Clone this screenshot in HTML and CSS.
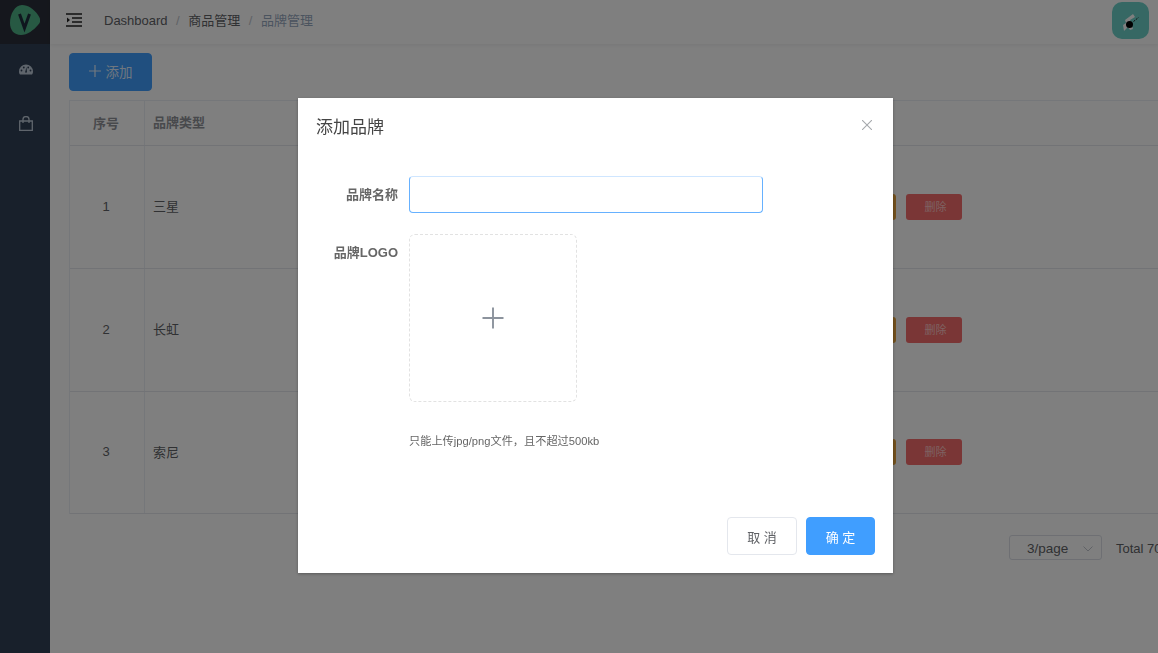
FILE: index.html
```html
<!DOCTYPE html>
<html lang="en">
<head>
    <meta charset="UTF-8">
    <meta name="viewport" content="width=device-width, initial-scale=1.0">
    <title>品牌管理</title>
    <link rel="stylesheet" href="styles.css">
</head>
<body>
    <div class="app">
        <aside class="sidebar">
            <div class="logo">
                <svg width="30" height="30" viewBox="0 0 30 30">
                    <path d="M12 0C18 0 24 4 28 10C31 14 31 17 28 20C24 25 17 30 11 30C4 30 0 25 0 18C0 9 5 0 12 0Z" fill="#4fb286"/>
                    <path d="M9.500 9L14.500 23L19.500 9" fill="none" stroke="#1f2d3d" stroke-width="3"/>
                </svg>
            </div>
            <div class="menu-item">
                <svg width="14" height="11" viewBox="0 0 14 11">
                    <path d="M7 0.500A7 7 0 0 0 0 7.500C0 8.800 0.400 10 1 10.500H13C13.600 10 14 8.800 14 7.500A7 7 0 0 0 7 0.500Z" fill="#bfcbd9"/>
                    <circle cx="2.500" cy="6.500" r="0.900" fill="#304156"/>
                    <circle cx="4.800" cy="3.500" r="0.900" fill="#304156"/>
                    <circle cx="11.500" cy="6.500" r="0.900" fill="#304156"/>
                    <circle cx="9.200" cy="3.500" r="0.900" fill="#304156"/>
                    <path d="M6 8.500L7.500 3L8 8.500Z" fill="#304156"/>
                </svg>
            </div>
            <div class="menu-item">
                <svg width="14" height="15" viewBox="0 0 14 15">
                    <path d="M0.700 5H13.300V14.300H0.700ZM4 7V3.300A3 2.700 0 0 1 10 3.300V7" fill="none" stroke="#bfcbd9" stroke-width="1.300"/>
                </svg>
            </div>
        </aside>

        <div class="main">
            <header class="navbar">
                <svg class="fold-icon" width="16" height="14" viewBox="0 0 16 14">
                    <path d="M0 1H16M6 5H16M6 9H16M0 13H16" stroke="#222" stroke-width="1.400"/>
                    <path d="M1 4.500L4 7L1 9.500Z" fill="#222"/>
                </svg>
                <nav class="breadcrumb">
                    <span>Dashboard</span><i>/</i><span>商品管理</span><i>/</i><span class="current">品牌管理</span>
                </nav>
                <div class="avatar">
                    <svg width="24" height="24" viewBox="0 0 24 24">
                        <path d="M6 11L14 5L16 8L11 11L14 20L11 21L9 18L5 22L4 16L7 14Z" fill="#fff"/>
                        <circle cx="10.500" cy="15.500" r="3.500" fill="#000"/>
                        <path d="M14.500 12.500L19.500 8.500" stroke="#222" stroke-width="1" stroke-dasharray="2 1"/>
                    </svg>
                </div>
            </header>

            <section class="content">
                <button class="btn-add">
                    <svg width="12" height="12" viewBox="0 0 12 12"><path d="M6 0V12M0 6H12" stroke="#fff" stroke-opacity="0.850" stroke-width="1.200"/></svg>
                    添加
                </button>

                <div class="table">
                    <div class="row head">
                        <div class="cell col-no">序号</div>
                        <div class="cell col-name">品牌类型</div>
                        <div class="cell col-logo"></div>
                        <div class="cell col-ops"></div>
                    </div>
                    <div class="row">
                        <div class="cell col-no">1</div>
                        <div class="cell col-name">三星</div>
                        <div class="cell col-logo"></div>
                        <div class="cell col-ops"><button class="op op-edit">修改</button><button class="op op-del">删除</button></div>
                    </div>
                    <div class="row">
                        <div class="cell col-no">2</div>
                        <div class="cell col-name">长虹</div>
                        <div class="cell col-logo"></div>
                        <div class="cell col-ops"><button class="op op-edit">修改</button><button class="op op-del">删除</button></div>
                    </div>
                    <div class="row last">
                        <div class="cell col-no">3</div>
                        <div class="cell col-name">索尼</div>
                        <div class="cell col-logo"></div>
                        <div class="cell col-ops"><button class="op op-edit">修改</button><button class="op op-del">删除</button></div>
                    </div>
                </div>

                <div class="pager">
                    <div class="page-size">3/page
                        <svg width="10" height="6" viewBox="0 0 10 6"><path d="M.500 .500L5 5L9.500 .500" fill="none" stroke="#c0c4cc"/></svg>
                    </div>
                    <span class="total">Total 70</span>
                </div>
            </section>
        </div>
    </div>

    <div class="overlay">
        <div class="dialog">
            <div class="dialog-head">
                <span class="dialog-title">添加品牌</span>
                <svg class="dialog-close" width="10" height="10" viewBox="0 0 10 10"><path d="M0 0L10 10M10 0L0 10" stroke="#a6a9ad" stroke-width="1.100"/></svg>
            </div>
            <form class="dialog-body">
                <div class="form-row">
                    <label class="form-label">品牌名称</label>
                    <input class="form-input" type="text">
                </div>
                <div class="form-row">
                    <label class="form-label">品牌LOGO</label>
                    <div>
                        <div class="upload">
                            <svg width="24" height="24" viewBox="0 0 24 24"><path d="M12 1.500V22.500M1.500 12H22.500" stroke="#8c939d" stroke-width="1.900"/></svg>
                        </div>
                        <p class="tip">只能上传jpg/png文件，且不超过500kb</p>
                    </div>
                </div>
            </form>
            <div class="dialog-foot">
                <button class="btn">取 消</button>
                <button class="btn btn-primary">确 定</button>
            </div>
        </div>
    </div>
</body>
</html>
```

FILE: styles.css
```css
* {
    box-sizing: border-box;
}
html, body {
    height: 100%;
    margin: 0;
    overflow: hidden;
}
body {
    font-family: "Liberation Sans", "Noto Sans CJK SC", sans-serif;
    font-size: 14px;
    color: #606266;
    background-color: #fff;
}
button {
    font-family: inherit;
    cursor: pointer;
}
.app {
    display: flex;
    height: 100%;
}
.sidebar {
    flex: 0 0 50px;
    background-color: #304156;
}
.logo {
    height: 44px;
    display: flex;
    align-items: center;
    justify-content: center;
    padding-bottom: 4px;
    background-color: #2b2f3a;
}
.menu-item {
    height: 52px;
    padding: 20px 0 0 1px;
    display: flex;
    align-items: flex-start;
    justify-content: center;
}
.main {
    flex: 0 0 1108px;
    width: 1108px;
}
.navbar {
    height: 44px;
    display: flex;
    align-items: center;
    padding: 0 9px 3px 16px;
    box-shadow: 0 1px 4px rgba(0, 21, 41, 0.08);
}
.fold-icon {
    margin-bottom: 2px;
}
.breadcrumb {
    margin-left: 22px;
    padding-bottom: 2px;
    font-size: 13px;
    color: #606266;
}
.breadcrumb i {
    margin: 0 8.500px;
    font-style: normal;
    color: #c0c4cc;
}
.breadcrumb .current {
    color: #97a8be;
}
.avatar {
    margin-left: auto;
    width: 37px;
    height: 37px;
    border-radius: 10px;
    background-color: #6cd0c8;
    display: flex;
    align-items: center;
    justify-content: center;
}
.content {
    padding: 9px 19px 0;
    width: 1230px;
}
.btn-add {
    display: flex;
    align-items: center;
    justify-content: center;
    gap: 5px;
    width: 83px;
    height: 38px;
    padding: 0 0 2px;
    border: 1px solid #409eff;
    border-radius: 4px;
    background-color: #409eff;
    color: rgba(255, 255, 255, 0.85);
    font-size: 13.500px;
}
.table {
    margin-top: 9px;
    border: 1px solid #ebeef5;
    border-bottom: 0;
}
.row {
    display: flex;
    height: 123px;
    border-bottom: 1px solid #e4e7ed;
    font-size: 13px;
}
.row.head {
    height: 45px;
    font-weight: bold;
    color: #909399;
}
.row.last {
    height: 122px;
}
.cell {
    display: flex;
    align-items: center;
    padding: 0 9px 3px;
    border-right: 1px solid #ebeef5;
}
.col-no {
    flex: 0 0 75px;
    justify-content: center;
    padding: 0 11px 2px 9px;
}
.col-name {
    flex: 0 0 300px;
    padding-left: 8px;
    border-right: 0;
}
.col-logo {
    flex: 0 0 386px;
    border-right: 0;
}
.col-ops {
    flex: 1;
    gap: 10px;
    padding: 0 0 0 9px;
    border-right: 0;
}
.row.last .col-ops {
    padding-bottom: 1px;
}
.op {
    width: 56px;
    height: 26px;
    padding: 0 0 2px 3px;
    border: 0;
    border-radius: 3px;
    color: rgba(255, 255, 255, 0.6);
    font-size: 11px;
}
.op-edit {
    background-color: #e6a23c;
}
.op-del {
    background-color: #f56c6c;
}
.pager {
    display: flex;
    align-items: center;
    margin-top: 21px;
    padding-left: 940px;
    font-size: 13.500px;
}
.page-size {
    width: 93px;
    height: 25px;
    display: flex;
    align-items: center;
    justify-content: space-between;
    padding: 2px 8px 0 17px;
    border: 1px solid #dcdfe6;
    border-radius: 3px;
}
.total {
    margin-left: 14px;
    padding-top: 2px;
    font-size: 13px;
}
.overlay {
    position: fixed;
    top: 0;
    left: 0;
    right: 0;
    bottom: 0;
    background-color: rgba(0, 0, 0, 0.5);
}
.dialog {
    width: 595px;
    height: 475px;
    margin: 98px 0 0 298px;
    background-color: #fff;
    box-shadow: 0 1px 3px rgba(0, 0, 0, 0.3);
    display: flex;
    flex-direction: column;
}
.dialog-head {
    display: flex;
    align-items: center;
    justify-content: space-between;
    padding: 0 21px 0 18px;
    height: 58px;
}
.dialog-title {
    padding-top: 2px;
    font-size: 17px;
    line-height: 24px;
    color: #444;
}
.dialog-close {
    margin-top: -4px;
}
.dialog-body {
    flex: 1;
    padding-top: 20px;
}
.form-row {
    display: flex;
    margin-bottom: 21px;
}
.form-label {
    width: 100px;
    margin-right: 11px;
    text-align: right;
    font-size: 13px;
    font-weight: bold;
    line-height: 37px;
    color: #666;
}
.form-input {
    width: 354px;
    height: 37px;
    border: 1px solid #66b1ff;
    border-top-color: #cfe6ff;
    border-radius: 4px;
    outline: none;
}
.upload {
    width: 168px;
    height: 168px;
    display: flex;
    align-items: center;
    justify-content: center;
    border: 1px dashed #e2e2e2;
    border-radius: 6px;
}
.tip {
    margin: 32px 0 0;
    font-size: 11.200px;
    line-height: 14px;
    color: #666;
}
.dialog-foot {
    display: flex;
    justify-content: flex-end;
    gap: 9px;
    padding: 0 18px 18px;
}
.btn {
    width: 70px;
    height: 38px;
    padding: 0;
    border: 1px solid #e4e7ed;
    border-radius: 4px;
    background-color: #fff;
    color: #606266;
    font-size: 13px;
}
.btn-primary {
    width: 69px;
    border-color: #409eff;
    background-color: #409eff;
    color: #fff;
}
```
